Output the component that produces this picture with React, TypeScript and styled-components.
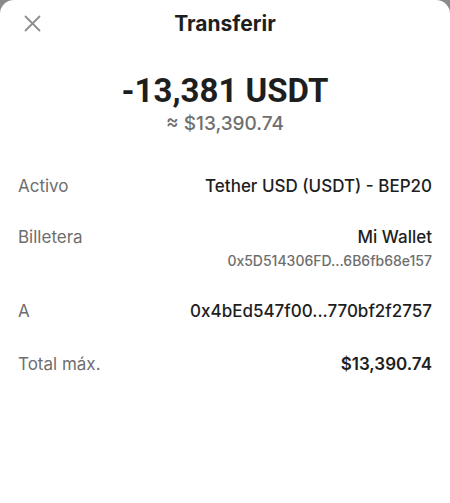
import React from 'react';
import styled, { createGlobalStyle } from 'styled-components';

const GlobalStyle = createGlobalStyle`
  html, body {
    margin: 0;
    padding: 0;
    background: #8a8a8a;
  }
  body {
    font-family: Inter, "Noto Sans", Arial, sans-serif;
  }
`;

const Sheet = styled.div`
  height: 503px;
  background: #ffffff;
  border-radius: 14px 14px 0 0;
  box-sizing: border-box;
  padding: 0 18px;
  display: flex;
  flex-direction: column;
`;

const Header = styled.div`
  height: 46px;
  display: grid;
  grid-template-columns: 40px 1fr 40px;
  align-items: center;
`;

const CloseButton = styled.button`
  border: none;
  background: none;
  padding: 0 0 0 6px;
  display: flex;
  align-items: center;
  color: #8e8e8e;
  cursor: pointer;
`;

const Title = styled.h1`
  margin: 0;
  text-align: center;
  font-size: 21px;
  font-weight: 700;
  color: #1e1e1e;
`;

const AmountBlock = styled.div`
  margin-top: 27px;
  display: flex;
  flex-direction: column;
  align-items: center;
`;

const Amount = styled.div`
  font-family: Roboto, Arial, sans-serif;
  font-size: 33px;
  font-weight: 700;
  color: #1e1e1e;
  line-height: 36px;
`;

const Fiat = styled.div`
  margin-top: 3px;
  font-size: 19px;
  font-weight: 500;
  color: #6f6f6f;
`;

const Details = styled.div`
  margin-top: 41px;
  display: flex;
  flex-direction: column;
  gap: 30px;
`;

const Row = styled.div<{ $offset?: number }>`
  display: flex;
  justify-content: space-between;
  align-items: flex-start;
  margin-top: ${(p) => p.$offset ?? 0}px;
`;

const Label = styled.span`
  font-size: 17px;
  color: #6e6e6e;
  line-height: 21px;
`;

const ValueCol = styled.div`
  display: flex;
  flex-direction: column;
  align-items: flex-end;
  gap: 4px;
  margin-bottom: 1px;
`;

const Value = styled.span<{ $bold?: boolean }>`
  font-size: 17px;
  line-height: 21px;
  font-weight: ${(p) => (p.$bold ? 600 : 500)};
  color: #1e1e1e;
`;

const SubValue = styled.span`
  font-size: 14px;
  line-height: 18px;
  color: #6e6e6e;
  font-weight: 500;
`;

const XIcon = () => (
  <svg width="17" height="17" viewBox="0 0 17 17" fill="none">
    <path d="M1.5 1.5 L15.5 15.5 M15.5 1.5 L1.5 15.5" stroke="currentColor" strokeWidth="1.8" strokeLinecap="round" />
  </svg>
);

const App: React.FC = () => {
  return (
    <>
      <GlobalStyle />
      <Sheet>
        <Header>
          <CloseButton>
            <XIcon />
          </CloseButton>
          <Title>Transferir</Title>
          <span />
        </Header>
        <AmountBlock>
          <Amount>-13,381 USDT</Amount>
          <Fiat>≈ $13,390.74</Fiat>
        </AmountBlock>
        <Details>
          <Row>
            <Label>Activo</Label>
            <Value>Tether USD (USDT) - BEP20</Value>
          </Row>
          <Row>
            <Label>Billetera</Label>
            <ValueCol>
              <Value>Mi Wallet</Value>
              <SubValue>0x5D514306FD...6B6fb68e157</SubValue>
            </ValueCol>
          </Row>
          <Row>
            <Label>A</Label>
            <Value>0x4bEd547f00...770bf2f2757</Value>
          </Row>
          <Row $offset={2}>
            <Label>Total máx.</Label>
            <Value $bold>$13,390.74</Value>
          </Row>
        </Details>
      </Sheet>
    </>
  );
};

export default App;
